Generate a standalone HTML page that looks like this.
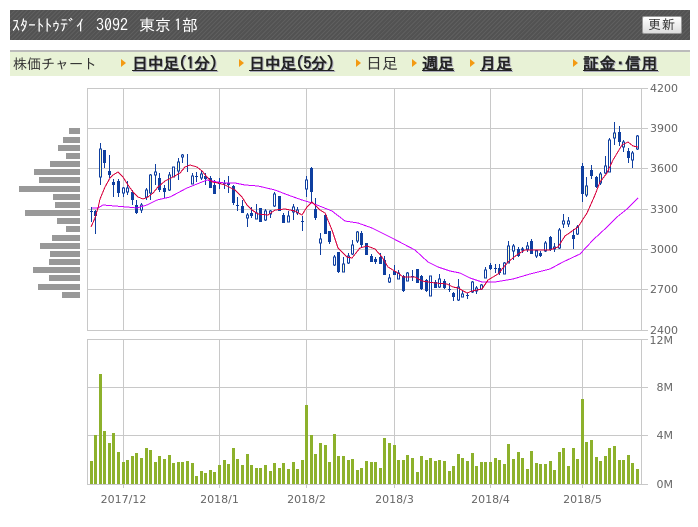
<!DOCTYPE html>
<html><head><meta charset="utf-8"><style>
html,body{margin:0;padding:0;background:#fff;width:698px;height:527px;overflow:hidden}
#h{position:absolute;left:10px;top:10px;width:680px;height:30px;background:#555 repeating-linear-gradient(135deg,#5f5f5f 0,#5f5f5f 1px,#525252 1px,#525252 3px)}
.t{position:absolute;white-space:nowrap;font-family:"IPAGothic","Liberation Sans",monospace}
#n{position:absolute;left:10px;top:50px;width:680px;height:24px;background:#e8f2d6;border-top:2px solid #bbb}
.a{position:absolute;top:59px;width:0;height:0;border-left:5px solid #f39a12;border-top:4px solid transparent;border-bottom:4px solid transparent}
.l{font-size:16px;font-weight:bold;color:#222;top:55px;text-decoration:underline;line-height:16px;text-shadow:1px 1px 0 #aab}
#b{position:absolute;left:642px;top:16px;width:38px;height:16px;border:1px solid #999;border-radius:2px;background:linear-gradient(#fff,#ddd);font:13px/16px "IPAGothic",monospace;color:#333;text-align:center;letter-spacing:1px}
svg{position:absolute;left:0;top:0}
</style></head><body>
<div id="h"></div>
<div class="t" style="left:12px;top:17px;font-size:16px;line-height:16px;color:#fff">ｽﾀｰﾄﾄｩﾃﾞｲ</div>
<div class="t" style="left:96px;top:17px;font-size:16px;line-height:16px;color:#fff">3092</div>
<div class="t" style="left:139px;top:17px;font-size:16px;line-height:16px;color:#fff">東京</div>
<div class="t" style="left:174px;top:17px;font-size:16px;line-height:16px;color:#fff">1部</div>
<div id="b">更新</div>
<div id="n"></div>
<div class="t" style="left:13px;top:56px;font-size:14px;line-height:16px;color:#333">株価チャート</div>
<div class="a" style="left:121px"></div><div class="t l" style="left:132px;letter-spacing:-.4px">日中足(1分)</div>
<div class="a" style="left:239px"></div><div class="t l" style="left:249px;letter-spacing:-.4px">日中足(5分)</div>
<div class="a" style="left:356px"></div><div class="t" style="left:366px;top:55px;font-size:16px;line-height:16px;color:#333">日足</div>
<div class="a" style="left:412px"></div><div class="t l" style="left:422px">週足</div>
<div class="a" style="left:470px"></div><div class="t l" style="left:480px">月足</div>
<div class="a" style="left:573px"></div><div class="t l" style="left:583px;letter-spacing:.6px">証金･信用</div>
<svg width="698" height="527" viewBox="0 0 698 527" shape-rendering="crispEdges">
<path fill="none" stroke="#c8c8c8" d="M87.5 88V330M123.5 88V330M219.5 88V330M306.5 88V330M394.5 88V330M490.5 88V330M582.5 88V330M641.5 88V330M87 88.5H648M87 128.5H648M87 168.5H648M87 209.5H648M87 249.5H648M87 289.5H648M87 330.5H648M87.5 339V485M123.5 339V488M219.5 339V488M306.5 339V488M394.5 339V488M490.5 339V488M582.5 339V488M641.5 339V485M87 339.5H648M87 387.5H648M87 435.5H648M87 484.5H648"/>
<path fill="#999" d="M69 128h11v6h-11zM63 137h17v6h-17zM58 145h22v6h-22zM66 153h14v6h-14zM50 161h30v6h-30zM34 169h46v6h-46zM39 177h41v6h-41zM19 186h61v6h-61zM53 194h27v6h-27zM55 202h25v6h-25zM25 210h55v6h-55zM57 218h23v6h-23zM66 226h14v6h-14zM52 235h28v6h-28zM40 243h40v6h-40zM50 251h30v6h-30zM49 259h31v6h-31zM33 267h47v6h-47zM49 275h31v6h-31zM38 284h42v6h-42zM62 292h18v6h-18z"/>
<g fill="none" stroke="#0f3fa0">
<path d="M91.5 207V222M95.5 210V234M100.5 143V185M104.5 150V168M109.5 155V178M113.5 179V197M118.5 179V197M123.5 187V197M127.5 181V195M132.5 190V205M136.5 200V214M141.5 203V213M146.5 188V200M150.5 174V200M155.5 164V185M159.5 173V192M164.5 185V198M169.5 172V191M173.5 167V177M178.5 158V180M182.5 154V163M187.5 154V172M192.5 173V184M196.5 172V182M201.5 171V180M205.5 173V185M210.5 176V188M214.5 180V194M219.5 178V189M224.5 180V189M228.5 176V193M233.5 185V205M237.5 197V211M242.5 200V213M247.5 213V227M251.5 207V218M256.5 204V219M260.5 208V222M265.5 209V221M270.5 210V218M274.5 192V207M279.5 196V211M283.5 213V223M288.5 211V222M293.5 204V220M297.5 207V215M302.5 216V231M306.5 176V197M311.5 167V203M315.5 198V220M320.5 233V255M325.5 215V234M329.5 231V244M334.5 255V266M338.5 252V273M343.5 257V272M348.5 253V264M352.5 240V255M357.5 231V243M361.5 231V248M366.5 243V255M371.5 254V262M375.5 257V264M380.5 253V264M384.5 256V275M389.5 274V283M394.5 265V275M398.5 270V279M403.5 275V292M407.5 272V281M412.5 270V281M417.5 269V283M421.5 275V290M426.5 279V292M430.5 276V296M435.5 280V288M439.5 274V288M444.5 279V289M449.5 283V292M453.5 292V301M458.5 279V301M462.5 290V297M467.5 293V299M472.5 281V293M476.5 286V294M481.5 284V290M485.5 267V278M490.5 263V270M495.5 264V273M499.5 264V275M504.5 262V274M508.5 241V263M513.5 244V260M518.5 247V257M522.5 247V253M527.5 242V252M531.5 239V254M536.5 250V258M540.5 251V257M545.5 241V252M550.5 236V251M554.5 243V252M559.5 228V249M563.5 214V228M568.5 217V227M573.5 229V249M577.5 225V235M582.5 163V202M586.5 177V197M591.5 165V179M596.5 176V188M600.5 172V185M605.5 156V174M609.5 138V172M614.5 122V145M619.5 126V146M623.5 140V152M628.5 148V163M632.5 151V168M637.5 135V150"/>
<path stroke-width="3" d="M91.5 211V212M95.5 211V216M104.5 150V163M109.5 171V175M113.5 182V185M118.5 181V193M132.5 192V200M136.5 205V213M159.5 178V190M164.5 188V192M196.5 176V177M205.5 176V179M210.5 178V188M214.5 185V194M219.5 182V184M224.5 183V184M228.5 183V185M233.5 186V203M237.5 205V206M242.5 206V213M251.5 213V216M260.5 208V222M279.5 196V211M283.5 215V223M302.5 221V222M311.5 168V192M315.5 209V218M325.5 215V234M329.5 231V242M338.5 252V272M361.5 233V245M366.5 243V255M371.5 256V262M375.5 259V262M380.5 257V264M384.5 260V275M394.5 271V275M403.5 276V291M412.5 276V277M417.5 269V283M421.5 276V289M426.5 280V291M435.5 282V288M444.5 281V288M449.5 289V290M453.5 293V297M467.5 295V296M490.5 265V269M495.5 268V269M499.5 268V273M518.5 249V256M531.5 241V254M540.5 253V256M550.5 237V250M573.5 235V239M582.5 166V194M591.5 170V176M596.5 177V187M619.5 132V142M628.5 151V158"/>
<path fill="#fff" d="M122.5 188h2v5h-2zM126.5 188h2v4h-2zM140.5 205h2v5h-2zM145.5 190h2v7h-2zM154.5 172h2v3h-2zM172.5 167h2v10h-2zM181.5 155h2v2h-2zM191.5 176h2v8h-2zM200.5 174h2v4h-2zM246.5 215h2v3h-2zM255.5 213h2v6h-2zM264.5 211h2v9h-2zM269.5 211h2v3h-2zM273.5 194h2v12h-2zM287.5 216h2v6h-2zM292.5 207h2v5h-2zM296.5 210h2v3h-2zM305.5 180h2v9h-2zM319.5 239h2v4h-2zM333.5 257h2v8h-2zM347.5 256h2v7h-2zM351.5 245h2v9h-2zM388.5 278h2v4h-2zM397.5 273h2v6h-2zM406.5 273h2v8h-2zM429.5 276h2v20h-2zM438.5 279h2v8h-2zM457.5 287h2v13h-2zM461.5 294h2v3h-2zM471.5 282h2v10h-2zM475.5 288h2v3h-2zM480.5 285h2v4h-2zM484.5 270h2v8h-2zM503.5 263h2v11h-2zM512.5 246h2v5h-2zM521.5 249h2v1h-2zM526.5 246h2v3h-2zM535.5 251h2v5h-2zM544.5 243h2v8h-2zM553.5 247h2v2h-2zM558.5 230h2v18h-2zM562.5 221h2v3h-2zM567.5 221h2v3h-2zM576.5 227h2v7h-2zM604.5 166h2v7h-2zM608.5 140h2v32h-2zM622.5 142h2v5h-2zM631.5 153h2v7h-2zM636.5 136h2v13h-2z"/>
<path fill="#ffffc8" d="M99.5 149h2v28h-2zM149.5 175h2v18h-2zM168.5 175h2v15h-2zM177.5 162h2v9h-2zM342.5 264h2v8h-2zM356.5 232h2v9h-2zM507.5 246h2v17h-2zM585.5 186h2v9h-2zM599.5 174h2v9h-2zM613.5 133h2v5h-2z"/>
</g>
<polyline fill="none" stroke="#cc00ff" points="92,208 98,208 103,205 115,206 127,207 137,208 147,205 157,200 170,197 187,188 207,180 217,182 225,183 235,183 245,185 258,186 275,190 288,195 302,200 312,203 332,211 345,221 358,223 372,228 392,238 415,250 428,262 438,267 450,271 460,273 470,278 482,282 495,282 513,279 530,274 550,269 563,262 580,254 593,240 607,227 617,217 627,209 638,198"/>
<polyline fill="none" stroke="#d8003c" points="91,227 95,218 98,208 100,199 105,187 110,178 113,175 118,172 123,177 128,185 133,192 138,197 143,199 148,197 153,193 158,187 165,181 173,177 180,173 185,167 190,165 197,167 202,171 207,177 212,182 218,183 225,185 235,190 242,197 247,205 252,210 258,214 268,215 275,210 285,209 295,211 302,215 307,207 312,202 320,210 325,213 332,230 338,248 347,257 352,258 360,248 367,246 375,249 382,257 388,267 398,273 403,277 415,277 422,281 435,283 447,284 453,287 458,288 467,293 472,291 482,289 488,280 498,274 508,262 518,254 525,250 550,250 558,247 565,236 578,227 587,213 595,195 600,182 607,173 613,160 622,145 628,142 633,146 638,147"/>
<g transform="translate(80 335) scale(.33333)" fill="none" stroke="#8db12c" stroke-width="9">
<path d="M34.5 447V378M46.5 447V300M61.5 447V117M73.5 447V288M88.5 447V324M100.5 447V294M115.5 447V351M130.5 447V381M142.5 447V375M157.5 447V363M169.5 447V354M184.5 447V369M199.5 447V339M211.5 447V345M226.5 447V381M238.5 447V363M253.5 447V372M268.5 447V360M280.5 447V384M295.5 447V381M307.5 447V381M322.5 447V378M337.5 447V384M349.5 447V423M364.5 447V408M376.5 447V414M391.5 447V405M403.5 447V411M418.5 447V390M433.5 447V375M445.5 447V387M460.5 447V339M472.5 447V372M487.5 447V390M502.5 447V357M514.5 447V390M529.5 447V399M541.5 447V399M556.5 447V390M571.5 447V408M583.5 447V384M598.5 447V399M610.5 447V384M625.5 447V402M640.5 447V381M652.5 447V402M667.5 447V375M679.5 447V210M694.5 447V300M706.5 447V357M721.5 447V324M736.5 447V330M748.5 447V381M763.5 447V297M775.5 447V363M790.5 447V363M805.5 447V375M817.5 447V372M832.5 447V405M844.5 447V399M859.5 447V378M874.5 447V381M886.5 447V381M901.5 447V399"/>
</g>
<g transform="translate(380 335) scale(.33333)" fill="none" stroke="#8db12c" stroke-width="9">
<path d="M13.5 447V309M28.5 447V324M43.5 447V330M55.5 447V375M70.5 447V375M82.5 447V360M97.5 447V369M112.5 447V411M124.5 447V363M139.5 447V375M151.5 447V369M166.5 447V378M178.5 447V375M193.5 447V378M208.5 447V408M220.5 447V393M235.5 447V357M247.5 447V369M262.5 447V378M277.5 447V354M289.5 447V393M304.5 447V381M316.5 447V381M331.5 447V381M346.5 447V369M358.5 447V375M373.5 447V387M385.5 447V327M400.5 447V372M415.5 447V351M427.5 447V369M442.5 447V402M454.5 447V348M469.5 447V384M481.5 447V387M496.5 447V387M511.5 447V378M523.5 447V405M538.5 447V351M550.5 447V339M565.5 447V393M580.5 447V339M592.5 447V372M607.5 447V192M619.5 447V321M634.5 447V315M649.5 447V366M661.5 447V378M676.5 447V363M688.5 447V339M703.5 447V333M718.5 447V375M730.5 447V375M745.5 447V360M757.5 447V384M772.5 447V402"/>
</g>
<g font-family="DejaVu Sans,sans-serif" font-size="11" fill="#666" shape-rendering="auto">
<text x="650" y="92">4200</text><text x="650" y="132">3900</text><text x="650" y="172">3600</text><text x="650" y="213">3300</text><text x="650" y="253">3000</text><text x="650" y="293">2700</text><text x="650" y="334">2400</text>
<text x="673" y="344" text-anchor="end">12M</text><text x="673" y="391" text-anchor="end">8M</text><text x="673" y="439" text-anchor="end">4M</text><text x="673" y="488" text-anchor="end">0M</text>
<g text-anchor="middle"><text x="123.5" y="503">2017/12</text><text x="219.5" y="503">2018/1</text><text x="306.5" y="503">2018/2</text><text x="394.5" y="503">2018/3</text><text x="490.5" y="503">2018/4</text><text x="582.5" y="503">2018/5</text></g>
</g>
</svg>
</body></html>
